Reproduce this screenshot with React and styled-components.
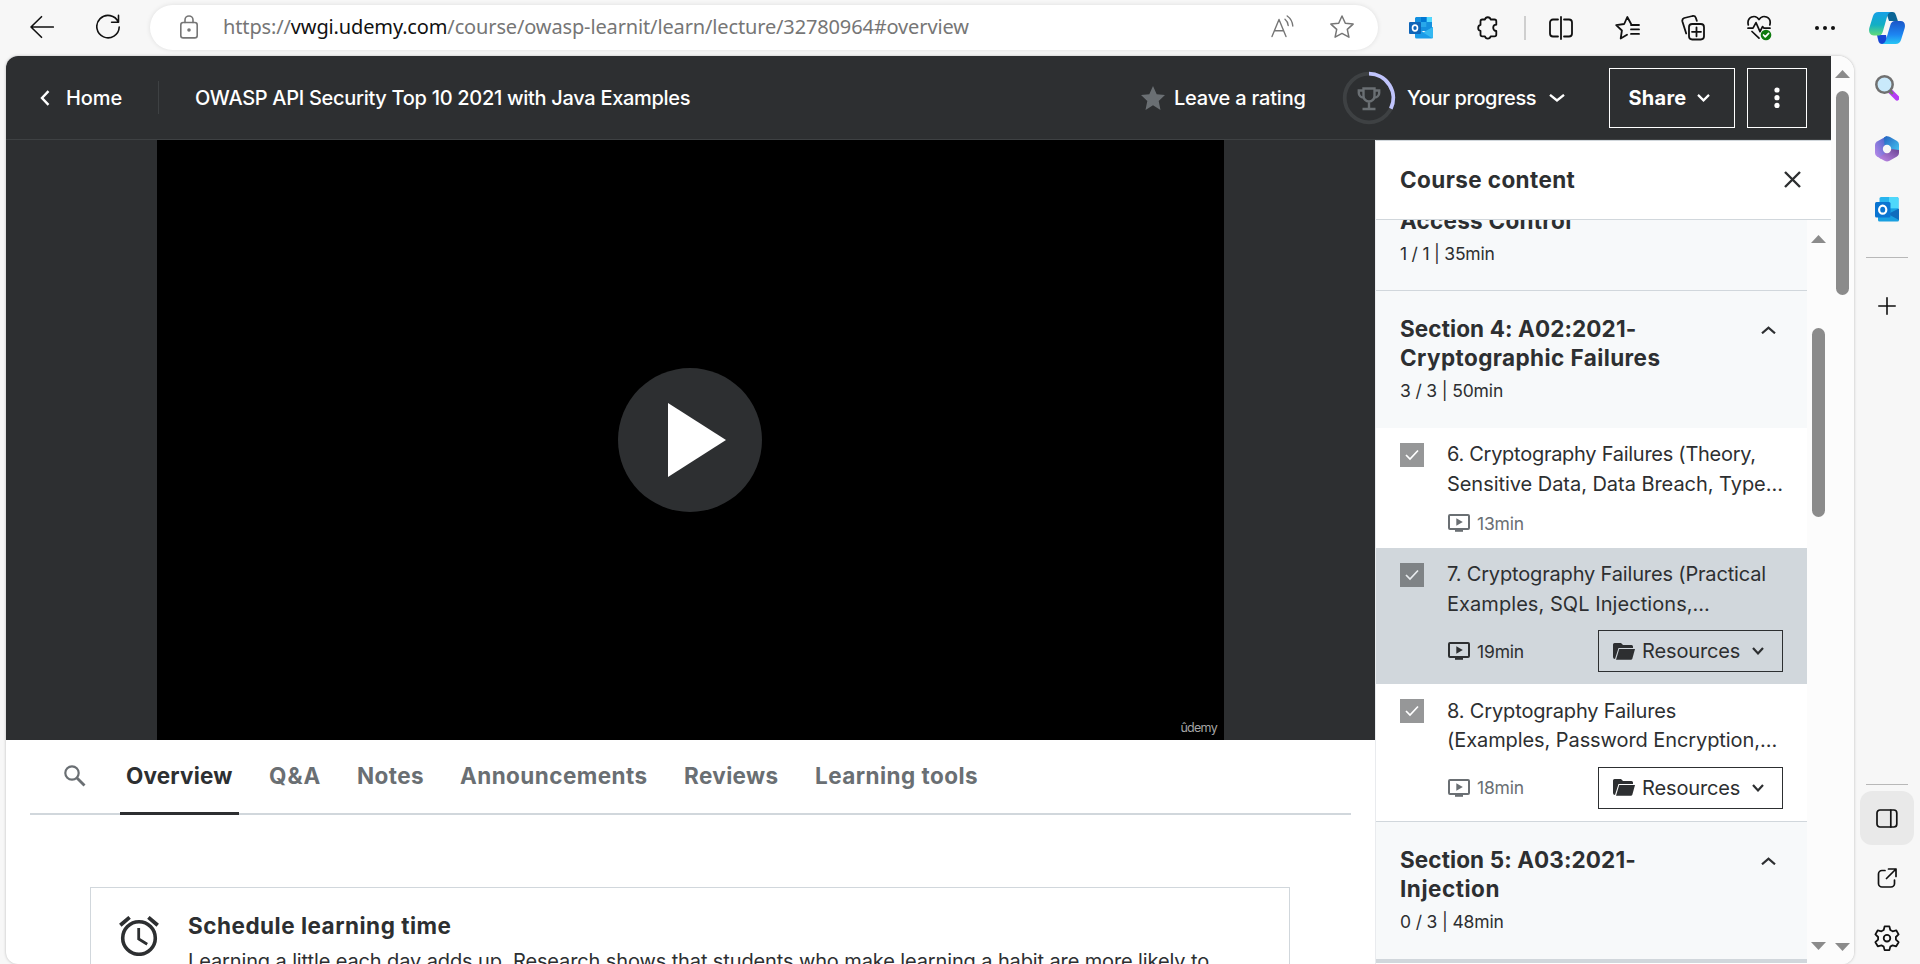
import React from 'react';
import styled, { createGlobalStyle, css } from 'styled-components';

const ink = '#2d2f31';
const grey = '#6a6f73';
const line = '#d1d7dc';

const GlobalStyle = createGlobalStyle`
  *, *::before, *::after { box-sizing: border-box; }
  body { margin: 0; overflow: hidden; background: #f7f7f7; }
  button { font: inherit; color: inherit; background: none; border: 0; padding: 0; cursor: pointer; }
  h1, h2, h3, p { margin: 0; font-weight: inherit; }
  svg { display: block; flex: none; }
`;

const Browser = styled.div`
  width: 1920px;
  height: 964px;
  display: grid;
  grid-template-columns: 1854px 66px;
  grid-template-rows: 56px 908px;
  background: #f7f7f7;
  color: ${ink};
  font-family: Inter, 'Liberation Sans', sans-serif;
  font-size: 20px;
  white-space: nowrap;
`;

const Label = styled.span`
  display: block;
  letter-spacing: ${(p) => p.$track || 0}px;
`;

/* Browser toolbar */
const Toolbar = styled.div`
  grid-column: 1 / 3;
  display: flex;
  align-items: flex-start;
  padding: 5px 15px 0 30px;
  color: #111;
`;
const NavButtons = styled.div`
  display: flex;
  align-items: center;
  gap: 42px;
  height: 44px;
  width: 120px;
`;
const AddressBar = styled.div`
  display: flex;
  align-items: center;
  width: 1228px;
  height: 45px;
  padding: 0 24px 1px 30px;
  border-radius: 23px;
  background: #fff;
  color: #767676;
  box-shadow: 0 0 5px rgba(0, 0, 0, 0.1);
`;
const Url = styled.div`
  flex: 1;
  margin-left: 25px;
  font: 20px/28px 'Noto Sans', 'Open Sans', sans-serif;
  letter-spacing: -0.14px;
  b { font-weight: 400; color: #111; }
`;
const AddressIcons = styled.div`
  display: flex;
  gap: 35px;
`;
const ToolbarIcons = styled.div`
  display: flex;
  align-items: center;
  height: 45px;
  margin-left: 31px;
`;
const ToolSlot = styled.div`
  display: flex;
  width: ${(p) => p.$w}px;
`;
const ToolDivider = styled.div`
  width: 2px;
  height: 24px;
  margin-right: 23px;
  background: #cfcfcf;
`;

/* Web page frame */
const Page = styled.div`
  display: grid;
  grid-template-columns: 1825px 23px;
  margin-left: 6px;
  border-radius: 12px 16px 12px 12px;
  overflow: hidden;
  background: #fff;
  box-shadow: 0 0 3px rgba(0, 0, 0, 0.25);
`;
const Site = styled.div`
  display: grid;
  grid-template-rows: 84px 824px;
  min-width: 0;
`;
const Header = styled.header`
  display: flex;
  align-items: center;
  padding: 0 24px 0 34px;
  border-bottom: 1px solid #3e4143;
  background: ${ink};
  color: #fff;
  font-weight: 500;
`;
const HomeLink = styled.a`
  display: flex;
  align-items: center;
  gap: 16px;
  width: 118px;
`;
const HeaderDivider = styled.div`
  width: 1px;
  height: 33px;
  margin-right: 36px;
  background: #3e4143;
`;
const CourseTitle = styled.h1`
  flex: 1;
  font-size: 20px;
`;
const Rating = styled.a`
  display: flex;
  align-items: center;
  gap: 9px;
  width: 201px;
`;
const Progress = styled.a`
  display: flex;
  align-items: center;
  width: 267px;
  svg:first-child { margin-right: 11px; }
  svg:last-child { margin-left: 13px; }
`;
const HeaderButton = styled.button`
  display: flex;
  align-items: center;
  justify-content: center;
  gap: 11px;
  width: ${(p) => p.$w}px;
  height: 60px;
  margin-right: ${(p) => p.$gap || 0}px;
  padding-right: ${(p) => (p.$gap ? 5 : 0)}px;
  border: 1px solid #fff;
  font-weight: 700;
`;

const Body = styled.div`
  display: grid;
  grid-template-columns: 1369px 456px;
`;
const Main = styled.main`
  display: grid;
  grid-template-rows: 600px 224px;
  overflow: hidden;
`;
const Player = styled.div`
  display: flex;
  padding-left: 151px;
  background: ${ink};
`;
const Video = styled.div`
  position: relative;
  display: flex;
  align-items: center;
  justify-content: center;
  width: 1067px;
  padding-right: 2px;
  background: #000;
`;
const PlayButton = styled.button`
  display: flex;
  align-items: center;
  width: 144px;
  height: 144px;
  padding-left: 50px;
  border-radius: 50%;
  background: ${ink};
`;
const Watermark = styled.span`
  position: absolute;
  right: 7px;
  bottom: 4px;
  color: #a4a4a4;
  font-size: 12.5px;
  line-height: 17px;
  letter-spacing: -0.7px;
`;

const Dashboard = styled.section`
  padding: 0 24px;
`;
const Tabs = styled.nav`
  display: flex;
  gap: 24px;
  height: 75px;
  padding-left: 34px;
  box-shadow: inset 0 -2px ${line};
  font-size: 22.5px;
  font-weight: 700;
`;
const SearchTab = styled.div`
  width: 32px;
  padding-top: 25px;
  color: ${grey};
`;
const Tab = styled.button`
  width: ${(p) => p.$w}px;
  padding: 0 0 4px 6px;
  text-align: left;
  line-height: 71px;
  color: ${grey};
  ${(p) => p.$active && css`
    color: ${ink};
    box-shadow: inset 0 -3px ${ink};
  `}
`;
const ScheduleCard = styled.article`
  display: flex;
  gap: 29px;
  width: 1200px;
  height: 120px;
  margin: 72px 0 0 60px;
  padding: 23px 28px;
  border: 1px solid ${line};
  svg { margin-top: 5px; }
`;
const CardTitle = styled.h2`
  font-size: 22.5px;
  font-weight: 700;
  line-height: 29px;
`;
const CardText = styled.p`
  margin-top: 6px;
  font-size: 20px;
  line-height: 30px;
`;

/* Course content */
const Aside = styled.aside`
  display: grid;
  grid-template-rows: 80px 744px;
  border-left: 1px solid #e9ebee;
  background: #fff;
`;
const AsideHeader = styled.div`
  display: flex;
  align-items: center;
  justify-content: space-between;
  padding: 0 30px 1px 24px;
  border-top: 1px solid ${line};
  border-bottom: 1px solid ${line};
  font-size: 22.5px;
  font-weight: 700;
`;
const AsideBody = styled.div`
  display: grid;
  grid-template-columns: 431px 24px;
  overflow: hidden;
`;
const SectionHead = styled.div`
  display: flex;
  justify-content: space-between;
  height: 138px;
  padding: 23px 31px 0 24px;
  border-top: 1px solid ${line};
  background: #f7f9fa;
  svg { margin-top: 12px; }
`;
const ScrolledSection = styled.div`
  display: flex;
  flex-direction: column;
  justify-content: flex-end;
  height: 70px;
  padding: 0 24px 24px;
  overflow: hidden;
  background: #f7f9fa;
`;
const SectionTitle = styled.h3`
  font-size: 22.5px;
  font-weight: 700;
  line-height: 29px;
`;
const Meta = styled.div`
  margin-top: 6px;
  font-size: 17.5px;
  line-height: 25px;
`;
const Lecture = styled.div`
  display: flex;
  gap: 23px;
  padding: 12.4px 24px 11.6px;
  background: ${(p) => (p.$active ? '#d1d7dc' : '#fff')};
  color: ${ink};
`;
const Check = styled.span`
  display: flex;
  align-items: center;
  justify-content: center;
  width: 24px;
  height: 24px;
  margin-top: 2.4px;
  background: ${(p) => (p.$active ? '#7f8386' : '#969798')};
  color: ${(p) => (p.$active ? '#e8ebee' : '#fff')};
`;
const LectureBody = styled.div`
  flex: 1;
`;
const LectureTitle = styled.div`
  line-height: 29.3px;
`;
const LectureFoot = styled.div`
  display: flex;
  align-items: center;
  justify-content: space-between;
  height: ${(p) => (p.$tall ? 42 : 25.4)}px;
  margin-top: 11.4px;
  margin-bottom: 0.5px;
`;
const Duration = styled.div`
  display: flex;
  align-items: center;
  gap: 7px;
  padding-left: 1px;
  font-size: 17.5px;
  color: ${(p) => (p.$active ? ink : grey)};
`;
const ResourcesButton = styled.button`
  display: flex;
  align-items: center;
  width: 185px;
  height: 42px;
  padding-left: 14px;
  border: 1px solid ${ink};
  svg:first-child { margin-right: 7px; }
  svg:last-child { margin-left: 12px; }
`;
const NextLecture = styled.div`
  height: 4px;
  background: ${line};
`;

const ScrollTrack = styled.div`
  display: flex;
  flex-direction: column;
  align-items: center;
  padding: ${(p) => p.$pad};
  background: #fcfcfc;
  color: #8b8b8b;
`;
const Thumb = styled.div`
  width: 13px;
  height: ${(p) => p.$h}px;
  margin: ${(p) => p.$top}px 0 auto;
  border-radius: 7px;
  background: #8b8b8b;
`;

/* Edge sidebar */
const EdgeBar = styled.div`
  display: flex;
  flex-direction: column;
  align-items: center;
  padding: 19px 1px 0 0;
  color: #111;
`;
const EdgeRule = styled.div`
  width: 42px;
  height: 1px;
  margin: ${(p) => p.$m};
  background: #b8b8b8;
`;
const EdgeSlot = styled.div`
  display: flex;
  align-items: center;
  justify-content: center;
  width: 54px;
  height: ${(p) => p.$h}px;
  border-radius: 12px;
  background: ${(p) => (p.$on ? '#e9e9e9' : 'none')};
`;

const Svg = ({ w, h, sw = 1.6, fill = 'none', stroke = 'currentColor', children }) => (
  <svg width={w} height={h} viewBox={`0 0 ${w} ${h}`} fill={fill} stroke={stroke} strokeWidth={sw} strokeLinecap="round" strokeLinejoin="round">
    {children}
  </svg>
);
const Chevron = ({ w = 12, up, sw = 2.2 }) => (
  <Svg w={w} h={8} sw={sw}>
    <path strokeLinecap="butt" strokeLinejoin="miter" d={up ? `M1 7.3 L${w / 2} 1.6 L${w - 1} 7.3` : `M1 0.9 L${w / 2} 6.4 L${w - 1} 0.9`} />
  </Svg>
);
const Arrow = ({ down }) => (
  <Svg w={15} h={8} fill="currentColor" stroke="none">
    <path d={down ? 'M0 0H15L7.5 8Z' : 'M0 8H15L7.5 0Z'} />
  </Svg>
);
const BackIcon = () => (
  <Svg w={24} h={24}><path d="M23.3 12H1M11.5 1.7 1 12l10.5 10.3" /></Svg>
);
const ReloadIcon = () => (
  <Svg w={24} h={26}><path d="M22.3 8.2A11.2 11.2 0 1 0 23.2 13M22.5 1.4V8.2H15.6" /></Svg>
);
const LockIcon = () => (
  <Svg w={18} h={24}>
    <rect x="0.8" y="7.5" width="16.4" height="15.4" rx="2.4" />
    <path d="M5 7.5V5a4 4 0 0 1 8 0v2.5" />
    <circle cx="9" cy="15" r="1" fill="currentColor" />
  </Svg>
);
const ReadAloudIcon = () => (
  <Svg w={24} h={24} sw={1.4}>
    <path d="M1 21.5 8 4.5l7 17M3.4 15.8h9.2M14 4.2c2 1.6 3 3.7 3.2 6.3M16.2 1c3.4 2.4 5.2 5.6 5.6 10" />
  </Svg>
);
const StarOutline = () => (
  <Svg w={24} h={24} sw={1.5}><path d="M12 1l3.3 7.2 7.8.9-5.8 5.3 1.6 7.8L12 18.4 5.1 22.2l1.6-7.8L.9 9.1l7.8-.9z" /></Svg>
);
const OutlookClassic = () => (
  <Svg w={24} h={22} stroke="none">
    <path d="M7 0h15a1 1 0 0 1 1 1v13H6V1z" fill="#1490df" />
    <path d="M12 5h5.5v5H12z" fill="#28a8ea" /><path d="M17.5 0H22a1 1 0 0 1 1 1v4h-5.5z" fill="#50d9ff" /><path d="M17.5 5H23v5h-5.5z" fill="#1490df" />
    <path d="M12 0h5.5v5H12z" fill="#0078d4" />
    <path d="M6 10l9 5.5 9-5.5v10a1.5 1.5 0 0 1-1.5 1.5h-15A1.5 1.5 0 0 1 6 20z" fill="#1a9be8" />
    <path d="M24 10v10a1.5 1.5 0 0 1-.7 1.2L14 15.5z" fill="#35b8f1" />
    <rect y="5" width="12" height="12" rx="1" fill="#0f65b8" />
    <ellipse cx="6" cy="11" rx="2.5" ry="2.9" stroke="#fff" strokeWidth="1.6" />
  </Svg>
);
const PuzzleIcon = () => (
  <Svg w={24} h={24} sw={1.8}>
    <path d="M4.5 5.3Q4.500 3.500 6.300 3.500H8.900A3 3 0 0 1 14.700 3.500H18.500Q20.300 3.500 20.300 5.300V8.700A3.100 3.100 0 1 0 20.300 14.900V18.500Q20.300 20.300 18.500 20.300H14.700A3 3 0 0 1 8.900 20.300H6.300Q4.500 20.300 4.500 18.500V14.900A3.100 3.100 0 0 1 4.500 8.900Z" />
  </Svg>
);
const SplitIcon = () => (
  <Svg w={24} h={24} sw={1.8}>
    <path d="M9 3.5H4A3 3 0 0 0 1 6.500v11a3 3 0 0 0 3 3h5M15 3.500h5a3 3 0 0 1 3 3v11a3 3 0 0 1-3 3h-5M12 .9v22.200" />
  </Svg>
);
const FavoritesIcon = () => (
  <Svg w={25} h={24} sw={1.8}>
    <path d="M16 7.8 12.3 1 9.2 8 1.2 9.2l5.7 5.300-1.200 8L12 18.800M16 9h8M16 13.400h8M16 17.900h8" />
  </Svg>
);
const CollectionsIcon = () => (
  <Svg w={24} h={26} sw={1.8}>
    <rect x="8" y="9" width="15" height="15.5" rx="3.2" />
    <path d="M15.5 12.3v9M11 16.800h9M5.200 18.500 1.400 6.500Q.8 4 3.200 3L11.500 1Q14 .6 14.800 2.800l1 3" />
  </Svg>
);
const HealthIcon = () => (
  <Svg w={25} h={26} sw={1.7}>
    <path d="M1.3 10C-.6 2 8.500-1.500 12 4.600 15.600-1.500 25 2 22.800 10M1 13.200h5l3-5.600 4 9 2.500-5 1.500 1.600h6M5 16.500l7 6.600" />
    <circle cx="19" cy="20" r="5.3" fill="#0f7b0f" stroke="none" />
    <path d="M16.5 20l1.8 1.9 3.300-3.500" stroke="#fff" />
  </Svg>
);
const MoreIcon = ({ vertical }) => (
  vertical
    ? <Svg w={6} h={22} fill="currentColor" stroke="none"><circle cx="3" cy="3" r="2.6" /><circle cx="3" cy="10.7" r="2.6" /><circle cx="3" cy="18.4" r="2.6" /></Svg>
    : <Svg w={22} h={6} fill="currentColor" stroke="none"><circle cx="3" cy="3" r="2" /><circle cx="11" cy="3" r="2" /><circle cx="19" cy="3" r="2" /></Svg>
);
const CopilotIcon = () => (
  <Svg w={36} h={32} stroke="none">
    <defs>
      <linearGradient id="cpA" x1="0" y1="0" x2="0" y2="1"><stop offset="0" stopColor="#17a0e6" /><stop offset=".55" stopColor="#12afc4" /><stop offset="1" stopColor="#62dc78" /></linearGradient>
      <linearGradient id="cpB" x1="0" y1="0" x2="0" y2="1"><stop offset="0" stopColor="#1a56c8" /><stop offset=".6" stopColor="#1d86f2" /><stop offset="1" stopColor="#27c6f5" /></linearGradient>
    </defs>
    <path d="M17 0h6.5c2 0 2.700 1 3.400 3l2 6H20z" fill="#0b6596" />
    <path d="M8 23h9l2 9h-6c-2 0-3-1-3.600-3z" fill="#1746d3" />
    <path d="M9.5 0H22c-2.500.6-3.300 2.600-4 5l-4 14c-.8 3-2 4.500-4.500 4.500H4.800C1 23.500-.6 20 .3 16L4 4C5 1.300 6.500 0 9.500 0z" fill="url(#cpA)" />
    <path d="M26.5 32H13c2.800-.6 3.500-2.600 4.200-5l4-13.500c.8-3 2.200-4.500 4.800-4.500h5.500c3.500 0 5.200 3 4.200 7L32 28c-1 2.700-2.500 4-5.500 4z" fill="url(#cpB)" />
  </Svg>
);
const EdgeSearchIcon = () => (
  <Svg w={24} h={26} stroke="none">
    <path d="M16 17l6 6" stroke="#b63bf5" strokeWidth="5" />
    <path d="M14 15l3 3" stroke="#777" strokeWidth="3" />
    <circle cx="9.5" cy="9.5" r="8.2" fill="#c9e9fb" stroke="#707070" strokeWidth="2.5" />
  </Svg>
);
const M365Icon = () => (
  <Svg w={24} h={26} stroke="none">
    <defs>
      <linearGradient id="mA" x1="1" y1="0" x2="0" y2="1"><stop offset="0" stopColor="#3c62c8" /><stop offset="1" stopColor="#c08bea" /></linearGradient>
      <linearGradient id="mB" x1="0" y1="0" x2="1" y2="1"><stop offset="0" stopColor="#2463c0" /><stop offset="1" stopColor="#45c6f2" /></linearGradient>
      <linearGradient id="mC" x1="1" y1="0" x2="0" y2="1"><stop offset="0" stopColor="#6b4393" /><stop offset="1" stopColor="#c08bea" /></linearGradient>
    </defs>
    <path d="M12 0 2 5.5Q0 6.700 0 9v8q0 2.300 2 3.500l4 2.300 6-5V6z" fill="url(#mA)" />
    <path d="M9 1.5Q12-.8 15 1l7 4q2 1.200 2 3.500V16l-8-2-6.500-5z" fill="url(#mB)" />
    <path d="M24 14v3q0 2.300-2 3.500l-7.500 4.300q-2.500 1.300-5 0L4 21.700 12 16l4-3z" fill="url(#mC)" />
    <circle cx="12" cy="13" r="4.2" fill="#f7f7f7" />
  </Svg>
);
const OutlookNew = () => (
  <Svg w={24} h={25} stroke="none">
    <rect x="4.5" y="0" width="19" height="16" rx="1.5" fill="#28b4ee" />
    <path d="M14 0h8a1.5 1.5 0 0 1 1.500 1.500V11H14z" fill="#4fd8fb" />
    <path d="M3 12h21v11a1.5 1.5 0 0 1-1.500 1.500h-18A1.500 1.500 0 0 1 3 23z" fill="#199fe0" />
    <path d="M24 11.5V23L13 17z" fill="#0f6cbd" />
    <rect y="5" width="15.5" height="15.5" rx="1.5" fill="#0a74d1" />
    <ellipse cx="7.7" cy="12.7" rx="3.6" ry="4" stroke="#fff" strokeWidth="2.2" />
  </Svg>
);
const StarFilled = () => (
  <Svg w={24} h={24} fill={grey} stroke="none"><path d="M12 0l3.7 8.3 8.300.8-6.300 5.900L19.500 24 12 19.200 4.500 24 6.300 15 0 9.100l8.300-.8z" /></Svg>
);
const TrophyRing = () => (
  <Svg w={54} h={54} sw={3.8}>
    <circle cx="27" cy="27" r="24.3" stroke="#3e4143" />
    <path d="M27 2.7A24.300 24.300 0 0 1 48.800 37.700" stroke="#c0c4fc" strokeLinecap="butt" />
    <g stroke={grey} strokeWidth="2.4" strokeLinecap="butt" strokeLinejoin="miter">
      <path d="M21.500 17.500h11V25a5.500 5.500 0 0 1-11 0zM21.500 19.500h-4.700V22a4.500 4.500 0 0 0 4.700 4.500M32.500 19.500h4.700V22a4.500 4.500 0 0 1-4.700 4.500M27 30.500V37M20.500 38h13" />
    </g>
  </Svg>
);
const SearchIcon = () => (
  <Svg w={22} h={22} sw={2.2}><circle cx="8" cy="8" r="6.7" /><path d="M13 13l7.500 7.500" strokeLinecap="butt" strokeWidth="2.8" /></Svg>
);
const ClockIcon = () => (
  <Svg w={40} h={40} stroke={ink} sw={3.6}>
    <g strokeLinecap="butt" strokeLinejoin="miter"><circle cx="20" cy="22" r="16.3" /><path d="M1.300 9.300 10.600 1.400M38.700 9.300 29.400 1.400" strokeWidth="3.8" /><path d="M19.700 12v11l8.500 5.200" strokeWidth="2.8" /></g>
  </Svg>
);
const VideoIcon = () => (
  <Svg w={22} h={18} sw={2}>
    <rect x="1" y="1" width="20" height="14" rx="1" />
    <path d="M8.300 4.200 14.800 8l-6.500 3.800z" fill="currentColor" stroke="none" />
    <path d="M7 16.800h8" strokeLinecap="butt" />
  </Svg>
);
const FolderIcon = () => (
  <Svg w={22} h={17} fill={ink} stroke="none">
    <path d="M1.500 0H8l2 2h8.500q1.500 0 1.500 1.500V5H5.500L2 16Q0 16 0 14V1.500Q0 0 1.500 0z" />
    <path d="M6.200 6H22l-2.600 9.500q-.4 1.200-1.600 1.200H3z" />
  </Svg>
);
const CheckIcon = () => (
  <Svg w={14} h={12} sw={1.7}><path strokeLinecap="butt" strokeLinejoin="miter" d="M1 6l4 4L13 1.500" /></Svg>
);
const PanelIcon = () => (
  <Svg w={22} h={19} sw={1.7}><rect x="1" y="1" width="19.8" height="17" rx="3" /><path d="M14.800 1v17" /></Svg>
);
const ExternalIcon = () => (
  <Svg w={20} h={20} sw={1.7}><path d="M8 2.500H5a3.500 3.500 0 0 0-3.500 3.500v9.500A3.500 3.500 0 0 0 5 19h9a3.500 3.500 0 0 0 3.500-3.500V12M11.500 1h7.500v7.500M19 1 9.500 10.500" /></Svg>
);
const GearIcon = () => (
  <Svg w={26} h={26} sw={1.8}>
    <path d="M10.600 1.400h4.800l.9 3.600 2.300 1.300 3.600-1 2.400 4.100-2.700 2.600v2.600l2.700 2.600-2.400 4.100-3.600-1-2.300 1.300-.9 3.500h-4.800l-.9-3.500-2.300-1.300-3.600 1-2.400-4.100L4.100 14.600V12L1.400 9.400l2.400-4.100 3.600 1L9.700 5z" />
    <circle cx="13" cy="13.2" r="3.3" />
  </Svg>
);

const tabs = [
  ['Overview', 119, 0.18],
  ['Q&A', 64, 0.9],
  ['Notes', 79, 0.4],
  ['Announcements', 200, 0.43],
  ['Reviews', 107, 0.38],
  ['Learning tools', 176, 0.45],
];

const lectures = [
  { lines: [['6. Cryptography Failures (Theory,', -0.27], ['Sensitive Data, Data Breach, Type…', -0.04]], time: '13min' },
  { lines: [['7. Cryptography Failures (Practical', -0.16], ['Examples, SQL Injections,…', 0.06]], time: '19min', active: true, resources: true },
  { lines: [['8. Cryptography Failures', -0.15], ['(Examples, Password Encryption,…', -0.08]], time: '18min', resources: true },
];

const LectureRow = ({ lines, time, active, resources }) => (
  <Lecture $active={active}>
    <Check $active={active}><CheckIcon /></Check>
    <LectureBody>
      <LectureTitle>{lines.map(([t, k]) => <Label key={t} $track={k}>{t}</Label>)}</LectureTitle>
      <LectureFoot $tall={resources}>
        <Duration $active={active}><VideoIcon /><Label $track={-0.17}>{time}</Label></Duration>
        {resources && (
          <ResourcesButton><FolderIcon /><Label $track={-0.13}>Resources</Label><Chevron /></ResourcesButton>
        )}
      </LectureFoot>
    </LectureBody>
  </Lecture>
);

const Section = ({ lines, meta }) => (
  <SectionHead>
    <div>
      <SectionTitle>{lines.map(([t, k]) => <Label key={t} $track={k}>{t}</Label>)}</SectionTitle>
      <Meta><Label $track={-0.15}>{meta}</Label></Meta>
    </div>
    <Chevron w={15} up />
  </SectionHead>
);

export default function App() {
  return (
    <Browser>
      <GlobalStyle />
      <Toolbar>
        <NavButtons><BackIcon /><ReloadIcon /></NavButtons>
        <AddressBar>
          <LockIcon />
          <Url>https://<b>vwgi.udemy.com</b>/course/owasp-learnit/learn/lecture/32780964#overview</Url>
          <AddressIcons><ReadAloudIcon /><StarOutline /></AddressIcons>
        </AddressBar>
        <ToolbarIcons>
          <ToolSlot $w={67}><OutlookClassic /></ToolSlot>
          <ToolSlot $w={48}><PuzzleIcon /></ToolSlot>
          <ToolDivider />
          <ToolSlot $w={66}><SplitIcon /></ToolSlot>
          <ToolSlot $w={66}><FavoritesIcon /></ToolSlot>
          <ToolSlot $w={66}><CollectionsIcon /></ToolSlot>
          <ToolSlot $w={67}><HealthIcon /></ToolSlot>
          <ToolSlot $w={55}><MoreIcon /></ToolSlot>
          <CopilotIcon />
        </ToolbarIcons>
      </Toolbar>

      <Page>
        <Site>
          <Header>
            <HomeLink>
              <Svg w={10} h={16} sw={2.4}><path strokeLinecap="butt" strokeLinejoin="miter" d="M8.500 1.200 2 8l6.500 6.800" /></Svg>
              <Label $track={-0.1}>Home</Label>
            </HomeLink>
            <HeaderDivider />
            <CourseTitle><Label $track={-0.3}>OWASP API Security Top 10 2021 with Java Examples</Label></CourseTitle>
            <Rating><StarFilled /><Label $track={-0.2}>Leave a rating</Label></Rating>
            <Progress><TrophyRing /><Label $track={-0.38}>Your progress</Label><Chevron w={16} sw={2.4} /></Progress>
            <HeaderButton $w={126} $gap={12}><Label $track={0.25}>Share</Label><Chevron w={13} /></HeaderButton>
            <HeaderButton $w={60} aria-label="More options"><MoreIcon vertical /></HeaderButton>
          </Header>
          <Body>
            <Main>
              <Player>
                <Video>
                  <PlayButton aria-label="Play">
                    <Svg w={58} h={74} fill="#fff" stroke="none"><path d="M0 0l58 37L0 74z" /></Svg>
                  </PlayButton>
                  <Watermark>ûdemy</Watermark>
                </Video>
              </Player>
              <Dashboard>
                <Tabs>
                  <SearchTab><SearchIcon /></SearchTab>
                  {tabs.map(([name, w, k], i) => (
                    <Tab key={name} $w={w} $active={i === 0}><Label $track={k}>{name}</Label></Tab>
                  ))}
                </Tabs>
                <ScheduleCard>
                  <ClockIcon />
                  <div>
                    <CardTitle><Label $track={0.5}>Schedule learning time</Label></CardTitle>
                    <CardText><Label $track={-0.12}>Learning a little each day adds up. Research shows that students who make learning a habit are more likely to</Label></CardText>
                  </div>
                </ScheduleCard>
              </Dashboard>
            </Main>
            <Aside>
              <AsideHeader>
                <Label $track={0.4}>Course content</Label>
                <Svg w={17} h={17} sw={2.4}><path strokeLinecap="butt" d="M1 1l15 15M16 1 1 16" /></Svg>
              </AsideHeader>
              <AsideBody>
                <div>
                  <ScrolledSection>
                    <SectionTitle><Label $track={0.26}>Access Control</Label></SectionTitle>
                    <Meta><Label $track={-0.22}>1 / 1 | 35min</Label></Meta>
                  </ScrolledSection>
                  <Section lines={[['Section 4: A02:2021-', 0.1], ['Cryptographic Failures', 0.41]]} meta="3 / 3 | 50min" />
                  {lectures.map((l) => <LectureRow key={l.time} {...l} />)}
                  <Section lines={[['Section 5: A03:2021-', 0.1], ['Injection', 0.53]]} meta="0 / 3 | 48min" />
                  <NextLecture />
                </div>
                <ScrollTrack $pad="15px 2px 14px 0">
                  <Arrow />
                  <Thumb $top={85} $h={189} />
                  <Arrow down />
                </ScrollTrack>
              </AsideBody>
            </Aside>
          </Body>
        </Site>
        <ScrollTrack $pad="14px 0 13px">
          <Arrow />
          <Thumb $top={13} $h={204} />
          <Arrow down />
        </ScrollTrack>
      </Page>

      <EdgeBar>
        <EdgeSlot $h={26}><EdgeSearchIcon /></EdgeSlot>
        <EdgeSlot $h={96}><M365Icon /></EdgeSlot>
        <EdgeSlot $h={24}><OutlookNew /></EdgeSlot>
        <EdgeRule $m="36px 0 0" />
        <EdgeSlot $h={96}>
          <Svg w={18} h={18} sw={1.6}><path d="M9 .8v16.400M.8 9h16.400" /></Svg>
        </EdgeSlot>
        <EdgeRule $m="auto 0 6px" />
        <EdgeSlot $h={54} $on><PanelIcon /></EdgeSlot>
        <EdgeSlot $h={66}><ExternalIcon /></EdgeSlot>
        <EdgeSlot $h={53}><GearIcon /></EdgeSlot>
      </EdgeBar>
    </Browser>
  );
}
